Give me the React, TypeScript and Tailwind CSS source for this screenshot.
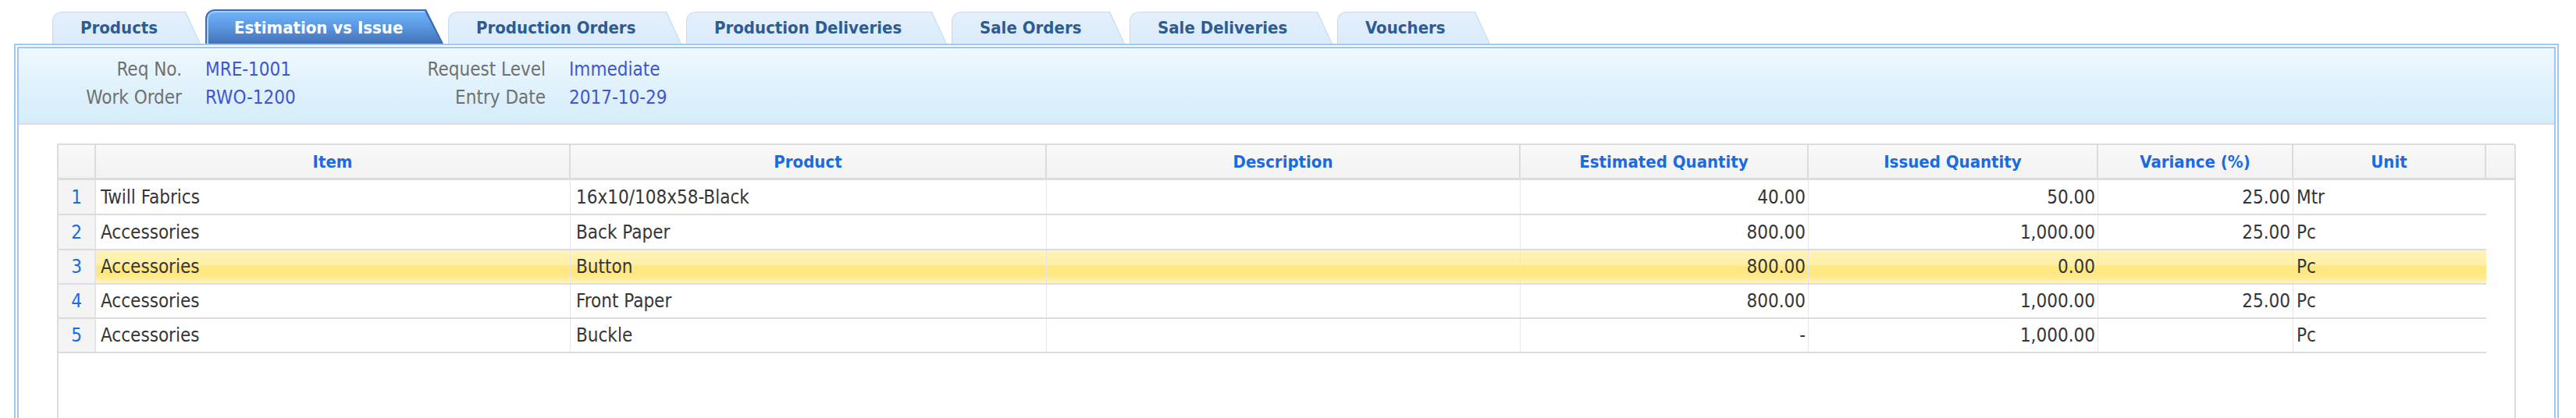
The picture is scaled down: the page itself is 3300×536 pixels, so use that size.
import React from 'react';

const font = "font-['DejaVu_Sans_Condensed','DejaVu_Sans',sans-serif]";

const tabs = [
  { label: 'Products', w: 'w-[190px]' },
  { label: 'Estimation vs Issue', w: 'w-[305px]', active: true },
  { label: 'Production Orders', w: 'w-[299px]' },
  { label: 'Production Deliveries', w: 'w-[334px]' },
  { label: 'Sale Orders', w: 'w-[222px]' },
  { label: 'Sale Deliveries', w: 'w-[260px]' },
  { label: 'Vouchers', w: 'w-[196px]' },
];

const rows = [
  { item: 'Twill Fabrics', product: '16x10/108x58-Black', est: '40.00', issued: '50.00', variance: '25.00', unit: 'Mtr' },
  { item: 'Accessories', product: 'Back Paper', est: '800.00', issued: '1,000.00', variance: '25.00', unit: 'Pc' },
  { item: 'Accessories', product: 'Button', est: '800.00', issued: '0.00', variance: '', unit: 'Pc', selected: true },
  { item: 'Accessories', product: 'Front Paper', est: '800.00', issued: '1,000.00', variance: '25.00', unit: 'Pc' },
  { item: 'Accessories', product: 'Buckle', est: '-', issued: '1,000.00', variance: '', unit: 'Pc' },
];

const headers = ['Item', 'Product', 'Description', 'Estimated Quantity', 'Issued Quantity', 'Variance (%)', 'Unit'];

const Tab: React.FC<{ label: string; w: string; active?: boolean }> = ({ label, w, active }) => {
  if (active) {
    return (
      <div className={`${w} h-[44px] rounded-t-[12px] bg-[#3b6bb3] px-[2px] pt-[2px] [clip-path:polygon(0_0,calc(100%-22px)_0,100%_100%,0_100%)]`}>
        <div className="h-full rounded-t-[10px] border-t-2 border-l-2 border-[#a6d0fa] bg-[linear-gradient(to_bottom,#6fb2f6,#5a98e2_45%,#4472b6)] pl-[33px] pt-[7px] text-[22px] font-bold leading-[26px] whitespace-nowrap text-white [clip-path:polygon(0_0,calc(100%-22px)_0,100%_100%,0_100%)]">
          {label}
        </div>
      </div>
    );
  }
  return (
    <div className={`${w} h-[41px] rounded-t-[12px] bg-[#c4dbf1] px-[1px] pt-[1px] [clip-path:polygon(0_0,calc(100%-19px)_0,100%_100%,0_100%)]`}>
      <div className="h-full rounded-t-[11px] bg-[linear-gradient(to_bottom,#e3f0fc,#dbebfa)] pl-[35px] pt-[7px] text-[22px] font-bold leading-[26px] whitespace-nowrap text-[#2d5c93] [clip-path:polygon(0_0,calc(100%-19px)_0,100%_100%,0_100%)]">
        {label}
      </div>
    </div>
  );
};

const App: React.FC = () => {
  return (
    <div className={`${font} h-[536px] w-[3300px] overflow-hidden bg-white`}>
      {/* Tabs */}
      <div className="flex items-end gap-[6px] pl-[67px] pt-[12px]">
        {tabs.map((t) => (
          <Tab key={t.label} label={t.label} w={t.w} active={t.active} />
        ))}
      </div>

      {/* Panel with double border, runs past the bottom of the view */}
      <div className="ml-[18px] flex h-[640px] w-[3260px] flex-col border-2 border-[#9cc8f5] bg-white p-[2px]">
        <div className="flex flex-1 flex-col border-2 border-[#9cc8f5]">
          {/* Header fields */}
          <div className="h-[98px] border-b-2 border-[#dcdcdc] bg-[linear-gradient(to_bottom,#eef8fe,#d4ecfa)] pt-[9px]">
            <div className="grid grid-cols-[209px_227px_179px_auto] gap-x-[30px] text-[24px] leading-[36px] whitespace-nowrap">
              <div className="text-right text-[#707070]">Req No.</div>
              <div className="text-[#3e56d5]">MRE-1001</div>
              <div className="text-right text-[#707070]">Request Level</div>
              <div className="text-[#3e56d5]">Immediate</div>
              <div className="text-right text-[#707070]">Work Order</div>
              <div className="text-[#3e56d5]">RWO-1200</div>
              <div className="text-right text-[#707070]">Entry Date</div>
              <div className="text-[#3e56d5]">2017-10-29</div>
            </div>
          </div>

          {/* Grid */}
          <div className="flex-1 bg-white px-[49px] pt-[24px]">
            <div className="h-full w-[3150px] rounded-tr-[3px] border-x-2 border-t-2 border-[#dcdcdc]">
              {/* header row */}
              <div className="grid h-[45px] grid-cols-[48px_608px_610px_607px_369px_371px_250px_247px_36px] border-b-[3px] border-[#dcdcdc] bg-[linear-gradient(to_bottom,#f9f9f9,#f2f2f2)] text-[22px] font-bold text-[#1a6be3]">
                <div className="border-r-2 border-[#dcdcdc]" />
                {headers.map((h) => (
                  <div key={h} className="flex items-center justify-center border-r-2 border-[#dcdcdc] whitespace-nowrap">
                    {h}
                  </div>
                ))}
                <div />
              </div>

              {/* body rows */}
              {rows.map((r, i) => (
                <div
                  key={i}
                  className={`grid w-[3110px] grid-cols-[48px_608px_610px_607px_369px_371px_250px_247px] border-b-2 text-[24px] text-[#363636] ${
                    i < 2 ? 'h-[45px]' : 'h-[44px]'
                  } ${r.selected ? 'border-[#dcdcee]' : 'border-[#dcdcdc]'}`}
                >
                  <div className="flex items-center justify-center border-r-2 border-[#e4e4e4] bg-[#f4f4f4] text-[#1a6be3]">
                    {i + 1}
                  </div>
                  <div
                    className={`col-span-7 grid grid-cols-[608px_610px_607px_369px_371px_250px_247px] ${
                      r.selected
                        ? 'bg-[linear-gradient(to_bottom,#fff3b6_0%,#fff0a8_42%,#ffe780_50%,#ffe886_78%,#fff4c2_100%)]'
                        : 'bg-white'
                    }`}
                  >
                    <div className="flex items-center border-r border-[#e6e6e6] pl-[6px] whitespace-nowrap">{r.item}</div>
                    <div className="flex items-center border-r border-[#e6e6e6] pl-[7px] whitespace-nowrap">{r.product}</div>
                    <div className="border-r border-[#e6e6e6]" />
                    <div className="flex items-center justify-end border-r border-[#e6e6e6] pr-[3px]">{r.est}</div>
                    <div className="flex items-center justify-end border-r border-[#e6e6e6] pr-[3px]">{r.issued}</div>
                    <div className="flex items-center justify-end border-r border-[#e6e6e6] pr-[3px]">{r.variance}</div>
                    <div className="flex items-center pl-[4px]">{r.unit}</div>
                  </div>
                </div>
              ))}
            </div>
          </div>
        </div>
      </div>
    </div>
  );
};

export default App;
